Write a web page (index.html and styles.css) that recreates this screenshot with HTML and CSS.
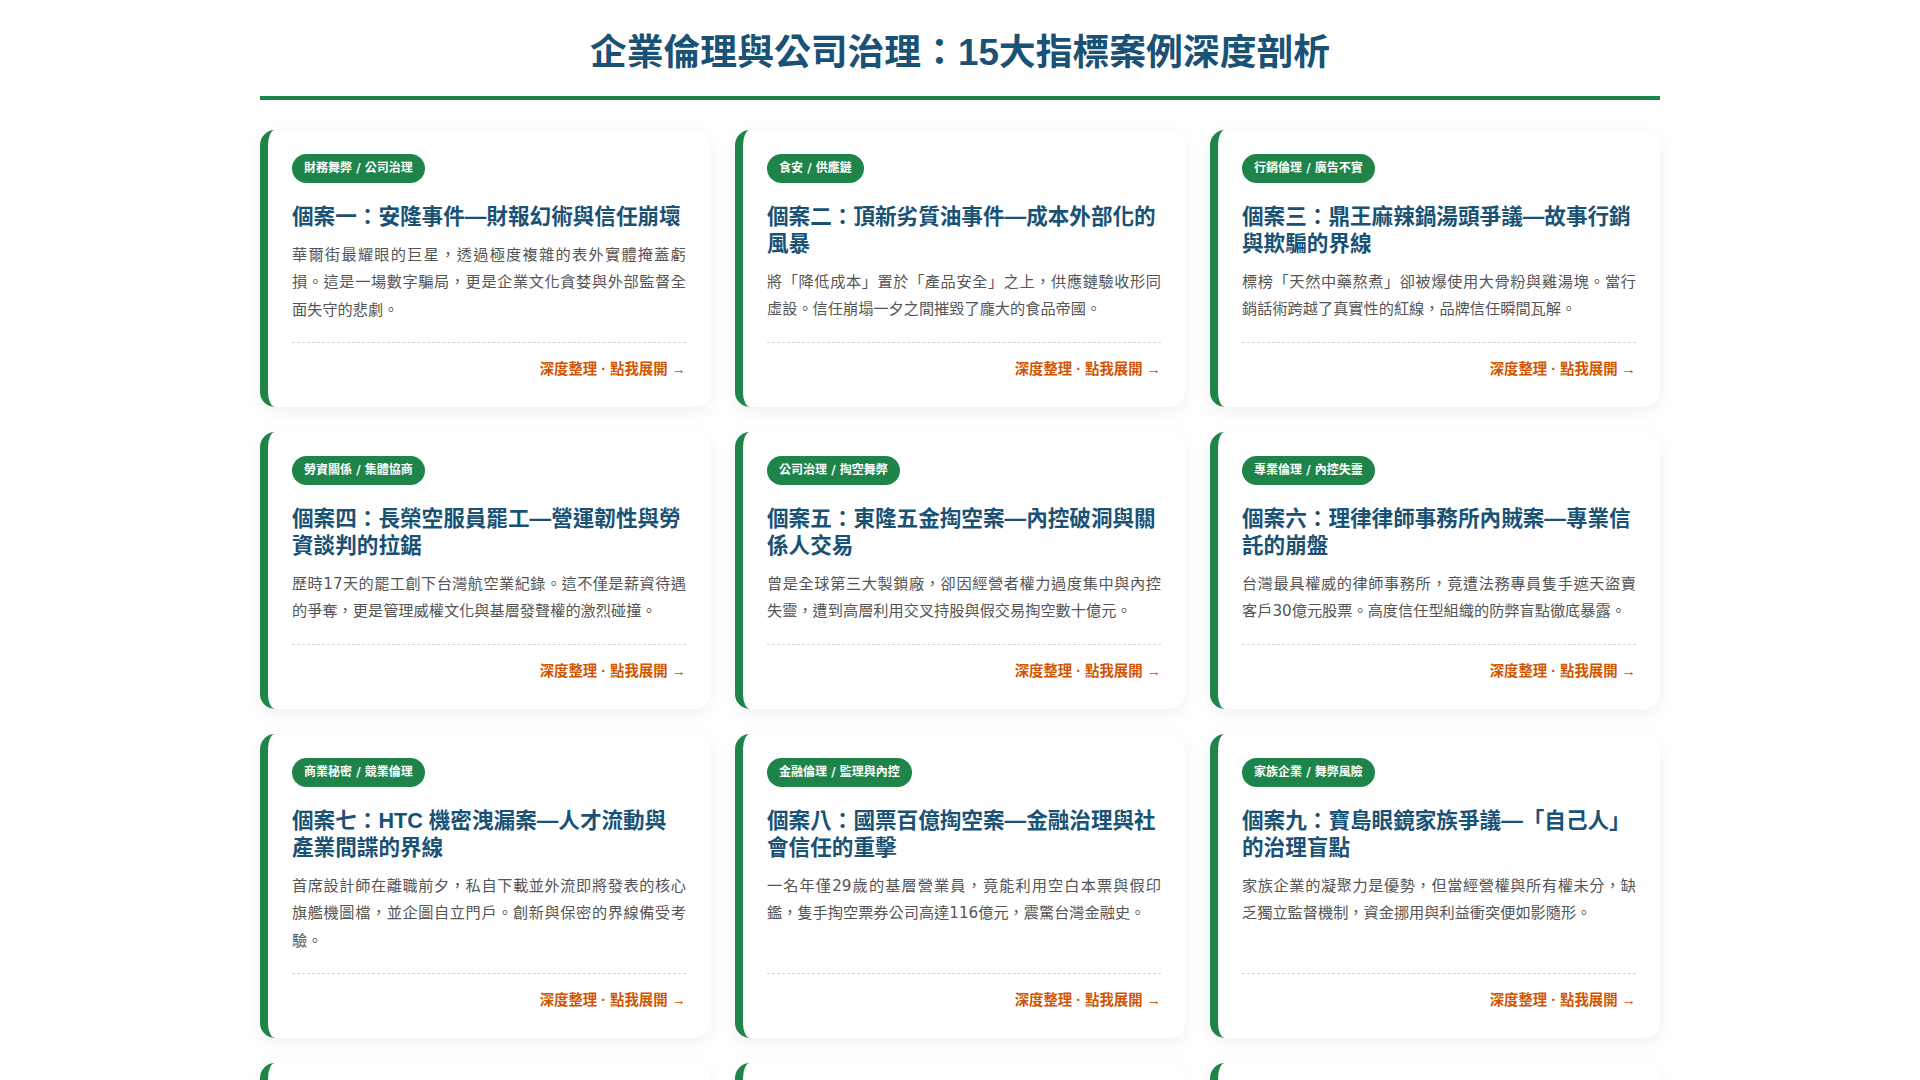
FILE: index.html
```html
<!DOCTYPE html>
<html lang="zh-Hant">
<head>
<meta charset="utf-8">
<title>企業倫理與公司治理：15大指標案例深度剖析</title>
<link rel="stylesheet" href="styles.css">
</head>
<body>
<div class="container">
  <header class="page-header">
    <h1>企業倫理與公司治理：15大指標案例深度剖析</h1>
  </header>
  <main class="grid">
    <article class="card">
      <span class="tag">財務舞弊 / 公司治理</span>
      <h2>個案一：安隆事件—財報幻術與信任崩壞</h2>
      <p>華爾街最耀眼的巨星，透過極度複雜的表外實體掩蓋虧損。這是一場數字騙局，更是企業文化貪婪與外部監督全面失守的悲劇。</p>
      <div class="card-foot"><span class="more">深度整理 · 點我展開 →</span></div>
    </article>
    <article class="card">
      <span class="tag">食安 / 供應鏈</span>
      <h2>個案二：頂新劣質油事件—成本外部化的風暴</h2>
      <p>將「降低成本」置於「產品安全」之上，供應鏈驗收形同虛設。信任崩塌一夕之間摧毀了龐大的食品帝國。</p>
      <div class="card-foot"><span class="more">深度整理 · 點我展開 →</span></div>
    </article>
    <article class="card">
      <span class="tag">行銷倫理 / 廣告不實</span>
      <h2>個案三：鼎王麻辣鍋湯頭爭議—故事行銷與欺騙的界線</h2>
      <p>標榜「天然中藥熬煮」卻被爆使用大骨粉與雞湯塊。當行銷話術跨越了真實性的紅線，品牌信任瞬間瓦解。</p>
      <div class="card-foot"><span class="more">深度整理 · 點我展開 →</span></div>
    </article>
    <article class="card">
      <span class="tag">勞資關係 / 集體協商</span>
      <h2>個案四：長榮空服員罷工—營運韌性與勞資談判的拉鋸</h2>
      <p>歷時17天的罷工創下台灣航空業紀錄。這不僅是薪資待遇的爭奪，更是管理威權文化與基層發聲權的激烈碰撞。</p>
      <div class="card-foot"><span class="more">深度整理 · 點我展開 →</span></div>
    </article>
    <article class="card">
      <span class="tag">公司治理 / 掏空舞弊</span>
      <h2>個案五：東隆五金掏空案—內控破洞與關係人交易</h2>
      <p>曾是全球第三大製鎖廠，卻因經營者權力過度集中與內控失靈，遭到高層利用交叉持股與假交易掏空數十億元。</p>
      <div class="card-foot"><span class="more">深度整理 · 點我展開 →</span></div>
    </article>
    <article class="card">
      <span class="tag">專業倫理 / 內控失靈</span>
      <h2>個案六：理律律師事務所內賊案—專業信託的崩盤</h2>
      <p>台灣最具權威的律師事務所，竟遭法務專員隻手遮天盜賣客戶30億元股票。高度信任型組織的防弊盲點徹底暴露。</p>
      <div class="card-foot"><span class="more">深度整理 · 點我展開 →</span></div>
    </article>
    <article class="card">
      <span class="tag">商業秘密 / 競業倫理</span>
      <h2>個案七：HTC 機密洩漏案—人才流動與產業間諜的界線</h2>
      <p>首席設計師在離職前夕，私自下載並外流即將發表的核心旗艦機圖檔，並企圖自立門戶。創新與保密的界線備受考驗。</p>
      <div class="card-foot"><span class="more">深度整理 · 點我展開 →</span></div>
    </article>
    <article class="card">
      <span class="tag">金融倫理 / 監理與內控</span>
      <h2>個案八：國票百億掏空案—金融治理與社會信任的重擊</h2>
      <p>一名年僅29歲的基層營業員，竟能利用空白本票與假印鑑，隻手掏空票券公司高達116億元，震驚台灣金融史。</p>
      <div class="card-foot"><span class="more">深度整理 · 點我展開 →</span></div>
    </article>
    <article class="card">
      <span class="tag">家族企業 / 舞弊風險</span>
      <h2>個案九：寶島眼鏡家族爭議—「自己人」的治理盲點</h2>
      <p>家族企業的凝聚力是優勢，但當經營權與所有權未分，缺乏獨立監督機制，資金挪用與利益衝突便如影隨形。</p>
      <div class="card-foot"><span class="more">深度整理 · 點我展開 →</span></div>
    </article>
    <article class="card">
      <span class="tag">環境倫理 / 企業社會責任</span>
      <h2>個案十：日月光K7廠排放廢水—環境成本的代價</h2>
      <p>半導體封測龍頭將含重金屬的廢水排入後勁溪，環保法規與企業社會責任的落差，引發社會對綠色治理的深刻反思。</p>
      <div class="card-foot"><span class="more">深度整理 · 點我展開 →</span></div>
    </article>
    <article class="card">
      <span class="tag">證券市場 / 資訊揭露</span>
      <h2>個案十一：樂陞收購案—跨國併購背後的騙局</h2>
      <p>日商高價公開收購卻無力交割，數萬名投資人血本無歸。資訊揭露不實與審查機制的漏洞一覽無遺。</p>
      <div class="card-foot"><span class="more">深度整理 · 點我展開 →</span></div>
    </article>
    <article class="card">
      <span class="tag">集團治理 / 掏空舞弊</span>
      <h2>個案十二：力霸集團掏空案—家族集團的骨牌效應</h2>
      <p>集團旗下公司交叉持股、虛設行號循環借貸，最終爆發擠兌危機，拖垮銀行與上市公司，損失逾千億元。</p>
      <div class="card-foot"><span class="more">深度整理 · 點我展開 →</span></div>
    </article>
    <article class="card">
      <span class="tag">食品標示 / 消費者權益</span>
      <h2>個案十三：胖達人香精麵包—「天然」標示的誠信危機</h2>
      <p>號稱天然酵母、不添加人工香料，卻被查出使用合成香精。名人光環加持的品牌，因誠信問題迅速崩落。</p>
      <div class="card-foot"><span class="more">深度整理 · 點我展開 →</span></div>
    </article>
    <article class="card">
      <span class="tag">環境倫理 / 法規遵循</span>
      <h2>個案十四：福斯柴油門—以軟體欺騙世界的代價</h2>
      <p>在數百萬輛柴油車中安裝作弊軟體規避排放檢測，全球品牌形象重挫，也讓企業付出數百億美元的賠償代價。</p>
      <div class="card-foot"><span class="more">深度整理 · 點我展開 →</span></div>
    </article>
    <article class="card">
      <span class="tag">吹哨者 / 組織文化</span>
      <h2>個案十五：台塑六輕工安事件—安全文化的警鐘</h2>
      <p>連續多起大火暴露了設備老化與維修管理的缺失，當產能與獲利優先於安全，工安風險終將以最昂貴的方式反撲。</p>
      <div class="card-foot"><span class="more">深度整理 · 點我展開 →</span></div>
    </article>
  </main>
</div>
</body>
</html>
```

FILE: styles.css
```css
* {
  box-sizing: border-box;
}

html, body {
  margin: 0;
  padding: 0;
  background: #ffffff;
}

body {
  font-family: "DejaVu Sans", "Noto Sans CJK TC", sans-serif;
  color: #555555;
}

.container {
  width: 1400px;
  margin: 0 auto;
  padding-bottom: 40px;
}

.page-header {
  padding-top: 30px;
  padding-bottom: 20px;
  border-bottom: 4px solid #1e8449;
  margin-bottom: 30px;
  text-align: center;
}

.page-header h1 {
  margin: 0;
  font-family: "Liberation Sans", "Noto Sans CJK TC", sans-serif;
  font-size: 36.8px;
  line-height: 46px;
  font-weight: 700;
  color: #1a5276;
}

.grid {
  display: grid;
  grid-template-columns: repeat(3, 1fr);
  gap: 25px;
}

.card {
  display: flex;
  flex-direction: column;
  align-items: flex-start;
  background: #ffffff;
  border-left: 8px solid #1e8449;
  border-radius: 15px;
  padding: 24px;
  box-shadow: 0 5px 18px rgba(0, 0, 0, 0.06);
}

.tag {
  display: inline-block;
  background: #1e8449;
  color: #ffffff;
  font-size: 12px;
  font-weight: 700;
  line-height: 17px;
  padding: 6px 12px;
  border-radius: 20px;
  margin-bottom: 20px;
}

.card h2 {
  margin: 0 0 12px;
  font-family: "Liberation Sans", "Noto Sans CJK TC", sans-serif;
  font-size: 21.6px;
  line-height: 27px;
  font-weight: 700;
  color: #1a5276;
}

.card p {
  margin: 0 0 18px;
  width: 100%;
  font-size: 15.2px;
  line-height: 1.8;
  text-align: justify;
  color: #555555;
}

.card-foot {
  margin-top: auto;
  width: 100%;
  border-top: 1px dashed #d5d5d5;
  padding-top: 12px;
  line-height: 28px;
  text-align: right;
}

.more {
  font-family: "Liberation Sans", "Noto Sans CJK TC", sans-serif;
  font-size: 14.4px;
  font-weight: 700;
  color: #d35400;
}
```
